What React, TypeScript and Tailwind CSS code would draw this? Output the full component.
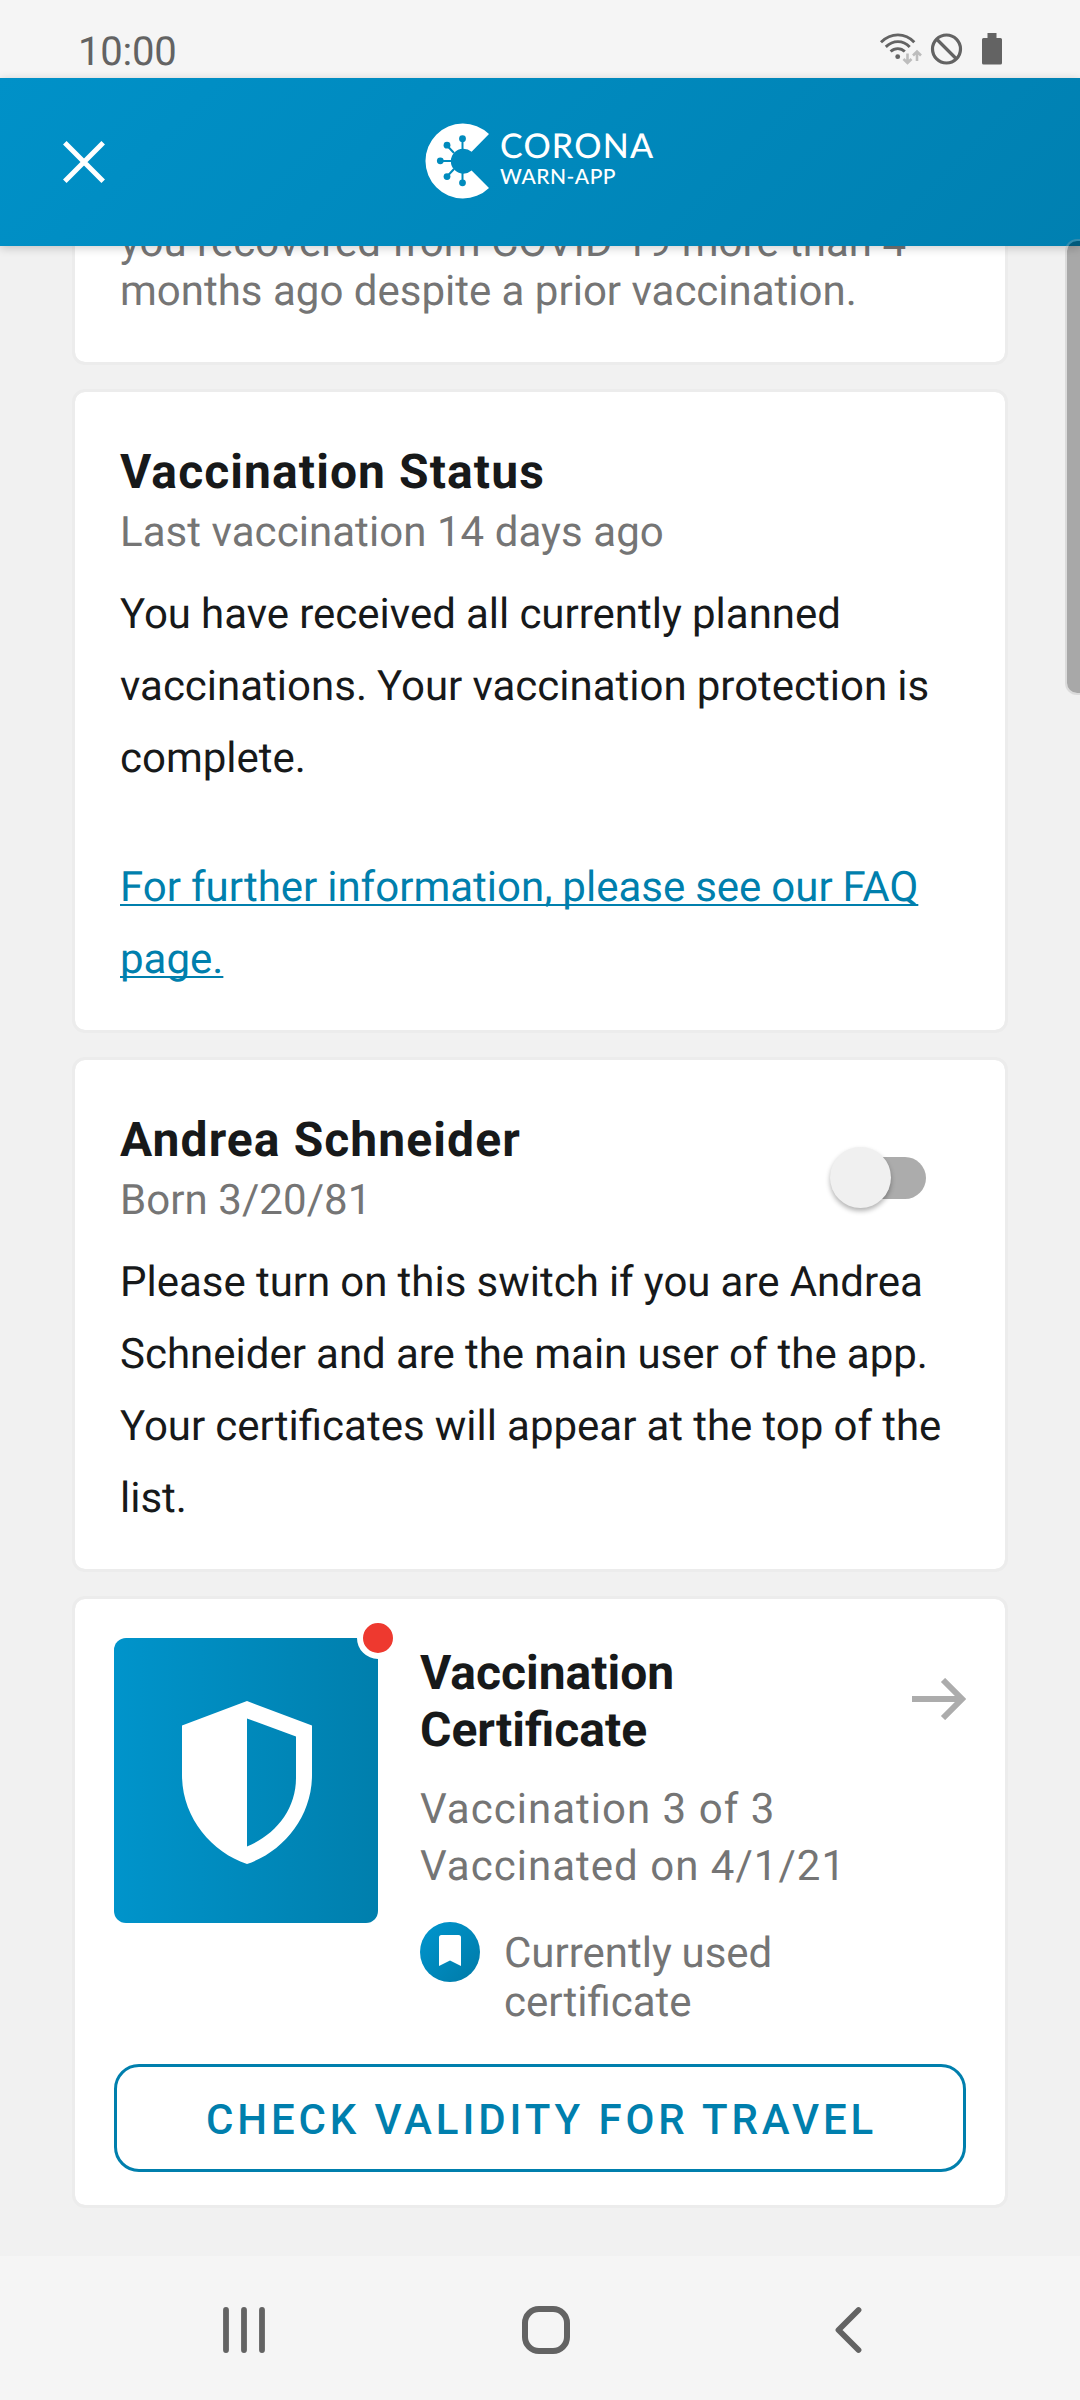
import type { ReactNode } from 'react';

function StatusBar() {
  return (
    <div className="flex h-[78px] shrink-0 items-start bg-[#f5f5f5] pl-[78px] pr-[78px] text-[#636363]">
      <span className="mt-[32px] text-[40px] leading-[40px] tracking-[-0.2px]">10:00</span>
      <svg className="mt-[30px] ml-auto" width="124" height="40" viewBox="0 0 124 40" fill="none" stroke="#636363">
        <g strokeWidth="2.9">
          <path d="M3 12.2C13 2.4 27 2.4 36.300 12.200" />
          <path d="M7.800 16.900C15 9.800 25 9.800 31.700 16.900" />
          <path d="M12.600 21.500C16.800 17.600 22.800 17.600 26.800 21.500" />
        </g>
        <circle cx="19.700" cy="26.700" r="2.400" fill="#636363" stroke="none" />
        <g stroke="#bdbdbd" strokeWidth="2.600">
          <path d="M29.500 23.500v9M25.500 29l4 4 4-4" />
          <path d="M39 31v-9M35 25.500l4-4 4 4" />
        </g>
        <circle cx="68.500" cy="19" r="14" strokeWidth="3.200" />
        <path d="M58.500 9l20 20" strokeWidth="3.200" />
        <path d="M109.500 3h9v5h4q1.500 0 1.500 1.500v23.500q0 1.500-1.500 1.500h-17q-1.500 0-1.500-1.500V9.500q0-1.500 1.500-1.500h4z" fill="#636363" stroke="none" />
      </svg>
    </div>
  );
}

function LogoMark() {
  return (
    <svg width="66" height="76" viewBox="0 0 66 76" fill="none">
      <path
        d="M64 11A37.500 37.500 0 1 0 64 65L46.600 47.600A12.500 12.500 0 1 1 46.600 28.800Z"
        fill="#fff"
      />
      <g stroke="#008bbd" strokeWidth="2">
        <path d="M37.500 27V16M37.500 49.500V60M26 38H15.500M29 30L22.500 23M29 46L22.500 53" />
      </g>
      <g fill="#008bbd">
        <circle cx="37.500" cy="15.700" r="3.400" />
        <circle cx="22" cy="22.200" r="3.400" />
        <circle cx="15.300" cy="37.800" r="3.400" />
        <circle cx="22" cy="53.600" r="3.400" />
        <circle cx="37.500" cy="59.800" r="3.400" />
      </g>
    </svg>
  );
}

function Header() {
  return (
    <header className="relative z-10 flex h-[168px] shrink-0 items-start bg-linear-135 from-[#0091c8] to-[#0080b1] pl-[63px] shadow-[0_2px_9px_rgba(0,0,0,0.2)]">
      <svg className="mt-[63px]" width="42" height="42" viewBox="0 0 42 42" stroke="#fff" strokeWidth="5">
        <path d="M1.800 1.800L40.200 40.200M40.200 1.800L1.800 40.200" />
      </svg>
      <div className="mt-[45px] ml-[320px] flex">
        <LogoMark />
        <div className="mt-[6px] ml-[9px] font-['Lato',sans-serif] font-medium text-white">
          <div className="text-[34px] leading-[34px] tracking-[1.200px]">CORONA</div>
          <div className="mt-[3px] text-[21px] leading-[21px] tracking-[0.500px]">WARN-APP</div>
        </div>
      </div>
    </header>
  );
}

function Card({ className, children }: { className: string; children: ReactNode }) {
  return (
    <section className={`mx-[72px] rounded-[13px] border-3 border-[#ececec] bg-white bg-clip-padding ${className}`}>
      {children}
    </section>
  );
}

const titleClass = 'text-[48px] leading-[60px] font-bold tracking-[1.080px]';
const subtitleClass = 'mt-[3px] text-[42px] leading-[56px] tracking-[0.060px] text-[#757575]';
const bodyClass = 'mt-[18px] text-[42px] leading-[72px] [word-spacing:-0.3px]';

function RecoveryCard() {
  return (
    <Card className="-mt-[60px] px-[45px] pt-[29px] pb-[46px] text-[42px] leading-[49px] text-[#757575]">
      you recovered from COVID-19 more than 4<br />
      months ago despite a prior vaccination.
    </Card>
  );
}

function StatusCard() {
  return (
    <Card className="mt-[24px] h-[644px] px-[45px] pt-[50px]">
      <h2 className={titleClass}>Vaccination Status</h2>
      <p className={subtitleClass}>Last vaccination 14 days ago</p>
      <p className={bodyClass}>
        You have received all currently planned<br />
        vaccinations. Your vaccination protection is<br />
        complete.
      </p>
      <p className="mt-[57px] text-[42px] leading-[72px] text-[#007fad] [word-spacing:-0.5px]">
        <a className="underline decoration-2 underline-offset-[3px] [text-decoration-skip-ink:none]" href="#faq">
          For further information, please see our FAQ<br />
          page.
        </a>
      </p>
    </Card>
  );
}

function Switch() {
  return (
    <button className="mt-[37px] mr-[34px] flex h-[61px] w-[96px] items-center" role="switch" aria-checked="false">
      <span className="z-10 size-[61px] shrink-0 rounded-full bg-[#f0f0f0] shadow-[0_3px_5px_rgba(0,0,0,0.3)]" />
      <span className="-ml-[49px] h-[42px] w-[84px] shrink-0 rounded-full bg-[#acacac]" />
    </button>
  );
}

function PersonCard() {
  return (
    <Card className="mt-[24px] h-[515px] px-[45px] pt-[50px]">
      <div className="flex h-[119px] items-start justify-between">
        <div>
          <h2 className={titleClass}>Andrea Schneider</h2>
          <p className={subtitleClass}>Born 3/20/81</p>
        </div>
        <Switch />
      </div>
      <p className={bodyClass}>
        Please turn on this switch if you are Andrea<br />
        Schneider and are the main user of the app.<br />
        Your certificates will appear at the top of the<br />
        list.
      </p>
    </Card>
  );
}

function ShieldTile() {
  return (
    <div className="relative flex h-[285px] w-[264px] shrink-0 items-start justify-center rounded-[12px] bg-linear-to-r from-[#0094cb] to-[#007fad] pt-[63px]">
      <svg className="mr-[-2px]" width="130" height="163" viewBox="0 0 130 163">
        <path
          d="M65 0L130 24.500V74C130 116 101 151 65 163C29 151 0 116 0 74V24.500ZM65 17.500V145.500C93 134 114 109 114 77V35.500Z"
          fill="#fff"
          fillRule="evenodd"
        />
      </svg>
      <span className="absolute -top-[21px] -right-[21px] size-[42px] rounded-full border-6 border-white bg-[#ee392f]" />
    </div>
  );
}

function CertificateCard() {
  return (
    <Card className="mt-[24px] h-[612px] px-[39px] pt-[39px]">
      <div className="flex items-start">
        <ShieldTile />
        <div className="mt-[6px] ml-[42px] h-[382px] flex-1">
          <h2 className="text-[48px] leading-[57px] font-bold">
            Vaccination<br />
            Certificate
          </h2>
          <p className="mt-[23px] text-[42px] leading-[57px] tracking-[1.020px] text-[#757575]">
            Vaccination 3 of 3<br />
            Vaccinated on 4/1/21
          </p>
          <div className="mt-[27px] flex items-start gap-[24px]">
            <span className="flex size-[60px] shrink-0 justify-center rounded-full bg-linear-135 from-[#0096cf] to-[#007aa7] pt-[13px]">
              <svg width="22" height="31" viewBox="0 0 22 31">
                <path d="M2.500 0H19.500Q22 0 22 2.500V31L11 25.500L0 31V2.500Q0 0 2.500 0Z" fill="#fff" />
              </svg>
            </span>
            <p className="mt-[7px] text-[42px] leading-[49px] text-[#757575] [word-spacing:-0.8px]">
              Currently used<br />
              certificate
            </p>
          </div>
        </div>
        <svg className="mt-[40px] shrink-0" width="54" height="42" viewBox="0 0 54 42" fill="none" stroke="#acacac" strokeWidth="6">
          <path d="M0 21H49M31 2L50 21L31 40" />
        </svg>
      </div>
      <button className="mt-[38px] h-[108px] w-full rounded-[25px] border-3 border-[#007fad] pt-[2px] pl-[3px] text-[42px] font-medium tracking-[3.900px] text-[#007fad]">
        CHECK VALIDITY FOR TRAVEL
      </button>
    </Card>
  );
}

function NavigationBar() {
  return (
    <nav className="flex h-[144px] shrink-0 items-start bg-[#f5f5f5] pt-[50px] pl-[223px]">
      <svg width="42" height="48" viewBox="0 0 42 48" stroke="#636363" strokeWidth="5.800" strokeLinecap="round">
        <path d="M3 4V44M21 4V44M39 4V44" />
      </svg>
      <span className="ml-[257px] size-[48px] rounded-[17px] border-6 border-[#636363]" />
      <svg className="ml-[264px]" width="30" height="48" viewBox="0 0 30 48" fill="none" stroke="#636363" strokeWidth="5.800" strokeLinecap="round" strokeLinejoin="round">
        <path d="M24.500 4L4.500 24L24.500 44" />
      </svg>
    </nav>
  );
}

export default function App() {
  return (
    <div className="relative flex h-[2400px] w-[1080px] flex-col overflow-hidden bg-[#f1f1f1] font-['Roboto',sans-serif] text-[#17191a] [text-rendering:geometricPrecision]">
      <StatusBar />
      <Header />
      <main className="flex min-h-0 flex-1 flex-col">
        <RecoveryCard />
        <StatusCard />
        <PersonCard />
        <CertificateCard />
      </main>
      <NavigationBar />
      <div className="absolute top-[239px] -right-[2px] z-20 h-[456px] w-[17px] rounded-l-[12px] border-2 border-[#a8a8a8]/30 bg-black/30 bg-clip-padding" />
    </div>
  );
}
